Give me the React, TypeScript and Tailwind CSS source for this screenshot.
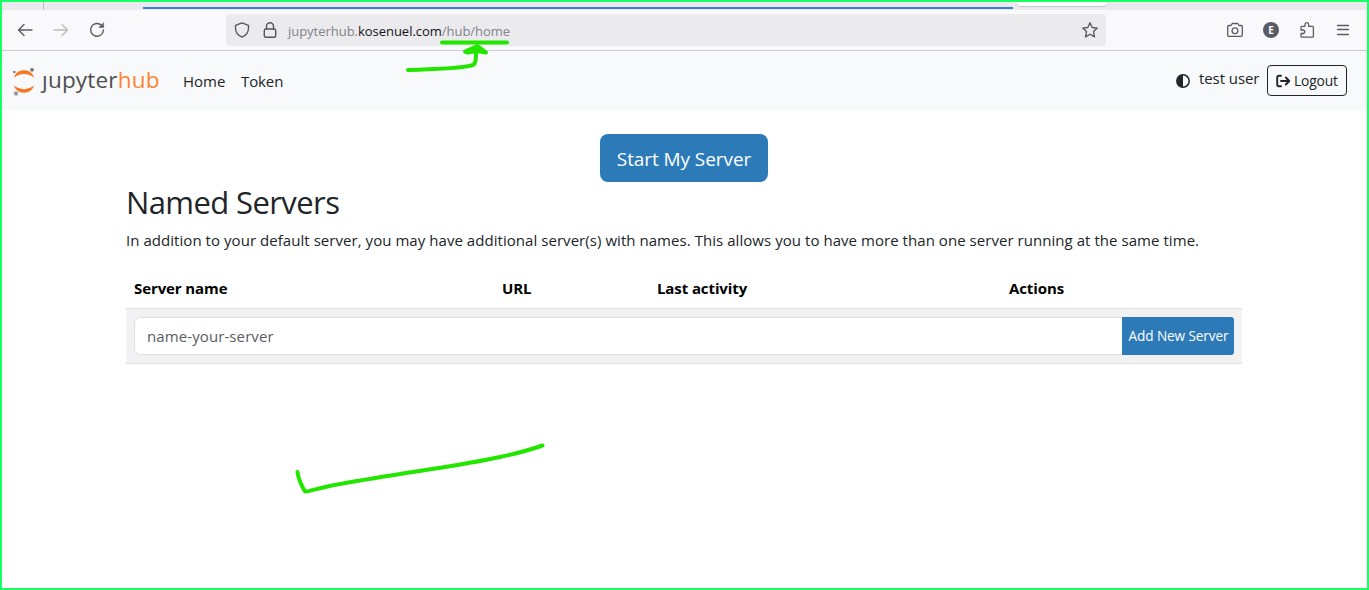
import React from 'react';

const stroke = { fill: 'none', stroke: 'currentColor', strokeLinecap: 'round', strokeLinejoin: 'round' } as const;

function BrowserBar() {
  return (
    <>
      <div className="flex h-2 bg-[#eaeaee]">
        <div className="w-[42px] border-r border-[#bdbdc4]" />
        <div className="ml-[99px] mt-[5px] h-[2px] w-[870px] bg-[#3b7bd4]" />
        <div className="ml-[4px] h-[4px] w-[90px] rounded-b bg-white shadow-[0_1px_1px_#c4c4ca]" />
      </div>
      <div className="flex h-[41px] items-center border-b border-[#cccccf] bg-[#f9f9fb] text-[#5b5b66]">
        <svg className="ml-[15px] h-4 w-4" viewBox="0 0 16 16" {...stroke} strokeWidth="1.4">
          <path d="M15 8H1.5M7 2.5L1.5 8L7 13.5" />
        </svg>
        <svg className="ml-5 h-4 w-4 text-[#bbbbc1]" viewBox="0 0 16 16" {...stroke} strokeWidth="1.4">
          <path d="M1 8H14.5M9 2.5L14.5 8L9 13.5" />
        </svg>
        <svg className="ml-5 h-4 w-4" viewBox="0 0 16 16" {...stroke} strokeWidth="1.4">
          <path d="M12.6 3.4A6.4 6.4 0 1 0 14.4 8" />
          <path d="M14.6 1V5.4H10.2Z" fill="currentColor" strokeWidth="0.6" />
        </svg>
        <div className="ml-[121px] flex h-8 w-[880px] items-center rounded bg-[#ebebed] pl-2 text-[#55555c]">
          <svg className="h-4 w-4" viewBox="0 0 16 16" {...stroke} strokeWidth="1.3">
            <path d="M8 .8L14.5 3.3V6C14.5 10.2 11.8 13.6 8 15.2C4.200 13.600 1.500 10.200 1.500 6V3.300Z" />
          </svg>
          <svg className="ml-3 h-4 w-4" viewBox="0 0 16 16" {...stroke} strokeWidth="1.4">
            <rect x="2.300" y="7" width="11.400" height="8.300" rx="1.500" />
            <path d="M4.500 7V4.200A3.500 3.500 0 0 1 11.500 4.200V7" />
          </svg>
          <div className="ml-[10px] mt-[4px] whitespace-nowrap text-[13px] tracking-[-0.030px] text-[#83838a]">
            jupyterhub.<span className="text-[#15141a]">kosenuel.com</span>/hub/home
          </div>
          <svg className="ml-auto mr-2 h-4 w-4" viewBox="0 0 16 16" {...stroke} strokeWidth="1.3">
            <path d="M8 .8L10.200 5.500L15.300 6.100L11.500 9.600L12.500 14.900L8 12.300L3.500 14.900L4.500 9.600L.7 6.100L5.800 5.500Z" />
          </svg>
        </div>
        <svg className="ml-[121px] h-4 w-4" viewBox="0 0 16 16" {...stroke} strokeWidth="1.3">
          <path d="M2 3.500H4L5.200 1.500H10.800L12 3.500H14Q15.300 3.500 15.300 4.800V13Q15.300 14.300 14 14.300H2Q.7 14.300 .7 13V4.800Q.7 3.500 2 3.500Z" />
          <circle cx="8" cy="8.700" r="2.900" />
        </svg>
        <div className="ml-5 flex h-4 w-4 items-center justify-center rounded-full bg-[#5b5b66] text-[10px] font-bold text-white">E</div>
        <svg className="ml-5 h-4 w-4" viewBox="0 0 16 16" {...stroke} strokeWidth="1.300">
          <path d="M2 7.500V5.200Q2 4.300 2.900 4.300H6V2.500A1.800 1.800 0 0 1 9.600 2.500V4.300H13.500Q14.400 4.300 14.400 5.200V14.200Q14.400 15.100 13.500 15.100H2.900Q2 15.100 2 14.200V11.500H4A1.750 1.750 0 0 0 4 8H2Z" />
        </svg>
        <svg className="ml-5 h-4 w-4" viewBox="0 0 16 16" {...stroke} strokeWidth="1.300">
          <path d="M2.500 3.500H13.500M2.500 7.500H13.500M2.500 12.500H13.500" />
        </svg>
      </div>
    </>
  );
}

function Logo() {
  return (
    <div className="ml-[10px] flex h-8 w-[149px] items-center">
      <svg className="h-[30px] w-6 shrink-0" viewBox="0 0 24 30">
        <path d="M2 11.700C4 1.800 20 1.800 22 11.700C17 6.600 7 6.600 2 11.700Z" fill="#f37726" />
        <path d="M2 19.300C4 29.200 20 29.200 22 19.300C17 24.400 7 24.400 2 19.300Z" fill="#f37726" />
        <circle cx="20" cy="3.800" r="1.900" fill="#767677" />
        <circle cx="2.300" cy="6" r="1.200" fill="#767677" />
        <circle cx="4" cy="27.500" r="2.200" fill="#9e9e9e" />
      </svg>
      <div className="-mt-[2px] ml-[6px] whitespace-nowrap text-[22.500px] leading-8 tracking-[0.200px] text-[#4e4e4e]">
        <span>ȷupyter</span>
        <span className="text-[#ff8432]">hub</span>
      </div>
    </div>
  );
}

function Header() {
  return (
    <header className="flex h-[59px] items-center bg-[#f8f9fa] text-[15px]">
      <Logo />
      <nav className="ml-[22px] mt-[2px] flex gap-4">
        <a className="w-[42px]">Home</a>
        <a className="w-[43px] tracking-[-0.100px]">Token</a>
      </nav>
      <svg className="ml-auto mt-px h-[14px] w-[14px]" viewBox="0 0 14 14">
        <circle cx="7" cy="7" r="6.200" fill="none" stroke="#212529" strokeWidth="1.500" />
        <path d="M7 1A6 6 0 0 0 7 13Z" fill="#212529" />
      </svg>
      <span className="-mt-[4px] ml-[9px] w-[60px] whitespace-nowrap tracking-[-0.080px]">test user</span>
      <button className="ml-2 mr-5 flex h-[31px] w-[80px] items-center rounded border border-[#212529] pl-2 text-[13.800px] tracking-[-0.150px]">
        <svg className="h-[14px] w-[15px] shrink-0" viewBox="0 0 15 14" {...stroke} strokeWidth="1.900">
          <path d="M5 1.800H3Q1.200 1.800 1.200 3.600V10.400Q1.200 12.200 3 12.200H5M5 7H13M9.800 3.500L13.300 7L9.800 10.500" />
        </svg>
        <span className="ml-[3px] mt-px">Logout</span>
      </button>
    </header>
  );
}

function ServerTable() {
  return (
    <table className="mt-[17px] w-full table-fixed border-collapse">
      <colgroup>
        <col className="w-[368px]" />
        <col className="w-[155px]" />
        <col className="w-[352px]" />
        <col />
      </colgroup>
      <thead>
        <tr className="h-[41px] border-b border-[#dee2e6] text-left text-[15px] tracking-[-0.100px] text-black">
          <th className="px-2 pb-0 pt-px">Server name</th>
          <th className="px-2 pb-0 pt-px">URL</th>
          <th className="px-2 pb-0 pt-px">Last activity</th>
          <th className="px-2 pb-0 pt-px">Actions</th>
        </tr>
      </thead>
      <tbody>
        <tr className="h-[55px] border-b border-[#dee2e6] bg-[#f2f2f2]">
          <td colSpan={4} className="px-2 py-0">
            <div className="flex h-[38px]">
              <input
                className="min-w-0 flex-1 rounded-l-md border border-r-0 border-[#dee2e6] bg-white px-3 pt-[2px] text-[15px] tracking-[0.100px] outline-none placeholder:text-[#595c5f]"
                placeholder="name-your-server"
              />
              <button className="w-[112px] whitespace-nowrap rounded-r-[3px] bg-[#2c7ab7] pl-px pt-px text-[13.600px] tracking-[-0.100px] text-white">Add New Server</button>
            </div>
          </td>
        </tr>
      </tbody>
    </table>
  );
}

function Annotations() {
  return (
    <svg className="pointer-events-none absolute -left-[2px] -top-[2px] h-[590px] w-[1369px]" viewBox="0 0 1369 590" fill="none" stroke="#23e600" strokeWidth="4" strokeLinecap="round" strokeLinejoin="round">
      <path d="M442 42.500H507" />
      <path d="M408 70C430 69 465 69 474 64.500Q476 62 476 54" />
      <path d="M477.500 46L465 51.500L468 52.500L477 51L486 52.500Z" fill="#23e600" />
      <path d="M297.500 472C298 478 302 487 305 491.500C308 492 321 487 343 483.500C400 473 460 466 500 457Q524 452 542.500 445.500" />
    </svg>
  );
}

export default function App() {
  return (
    <div className="relative h-[590px] w-[1369px] overflow-hidden border-2 border-[#1aff66] bg-white font-['Open_Sans','Noto_Sans',sans-serif] text-[#212529]">
      <BrowserBar />
      <Header />
      <main className="ml-[124px] w-[1116px] pt-6">
        <div className="flex justify-center">
          <button className="h-12 w-[168px] whitespace-nowrap rounded-lg bg-[#2c7ab7] pt-[2px] text-[19px] tracking-[-0.080px] text-white">Start My Server</button>
        </div>
        <h1 className="mt-px text-[31px] leading-[38px] tracking-[-0.600px]">Named Servers</h1>
        <p className="mt-[7px] h-[22px] whitespace-nowrap text-[15px] leading-[24px] tracking-[0.050px]">
          In addition to your default server, you may have additional server(s) with names. This allows you to have more than one server running at the same time.
        </p>
        <ServerTable />
      </main>
      <Annotations />
    </div>
  );
}
